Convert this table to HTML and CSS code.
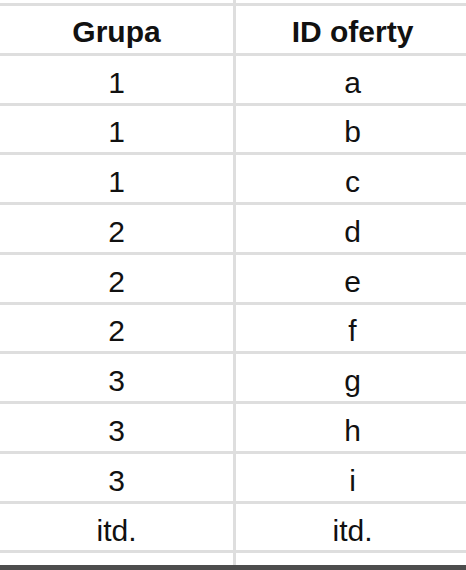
FILE: index.html
```html
<!DOCTYPE html>
<html lang="pl">
<head>
<meta charset="utf-8">
<title>Tabela</title>
<link rel="stylesheet" href="styles.css">
</head>
<body>
<div class="sheet">
  <div class="grid">
    <div class="cell stub"></div><div class="cell stub"></div>
    <div class="cell head">Grupa</div><div class="cell head">ID oferty</div>
    <div class="cell">1</div><div class="cell">a</div>
    <div class="cell">1</div><div class="cell">b</div>
    <div class="cell">1</div><div class="cell">c</div>
    <div class="cell">2</div><div class="cell">d</div>
    <div class="cell">2</div><div class="cell">e</div>
    <div class="cell">2</div><div class="cell">f</div>
    <div class="cell">3</div><div class="cell">g</div>
    <div class="cell">3</div><div class="cell">h</div>
    <div class="cell">3</div><div class="cell">i</div>
    <div class="cell">itd.</div><div class="cell">itd.</div>
    <div class="cell tail"></div><div class="cell tail"></div>
  </div>
  <div class="bar"></div>
</div>
</body>
</html>
```
FILE: styles.css
```css
html, body {
  margin: 0;
  padding: 0;
  background: #ffffff;
}
.sheet {
  width: 466px;
  height: 570px;
  overflow: hidden;
  display: flex;
  flex-direction: column;
}
.grid {
  display: grid;
  grid-template-columns: 233px 233px;
  grid-template-rows: 3px repeat(11, 46.77px) 1fr;
  column-gap: 3px;
  row-gap: 3px;
  background: #dedede;
  flex: 1;
  width: 469px;
}
.cell {
  background: #ffffff;
  display: flex;
  align-items: center;
  justify-content: center;
  font-family: "Liberation Sans", Arial, sans-serif;
  font-size: 30px;
  color: #111111;
  padding-top: 7px;
}
.head {
  font-weight: bold;
  font-size: 30px;
  padding-top: 6px;
}
.stub, .tail {
  padding: 0;
}
.bar {
  height: 5px;
  background: #4d4d4d;
}
```
